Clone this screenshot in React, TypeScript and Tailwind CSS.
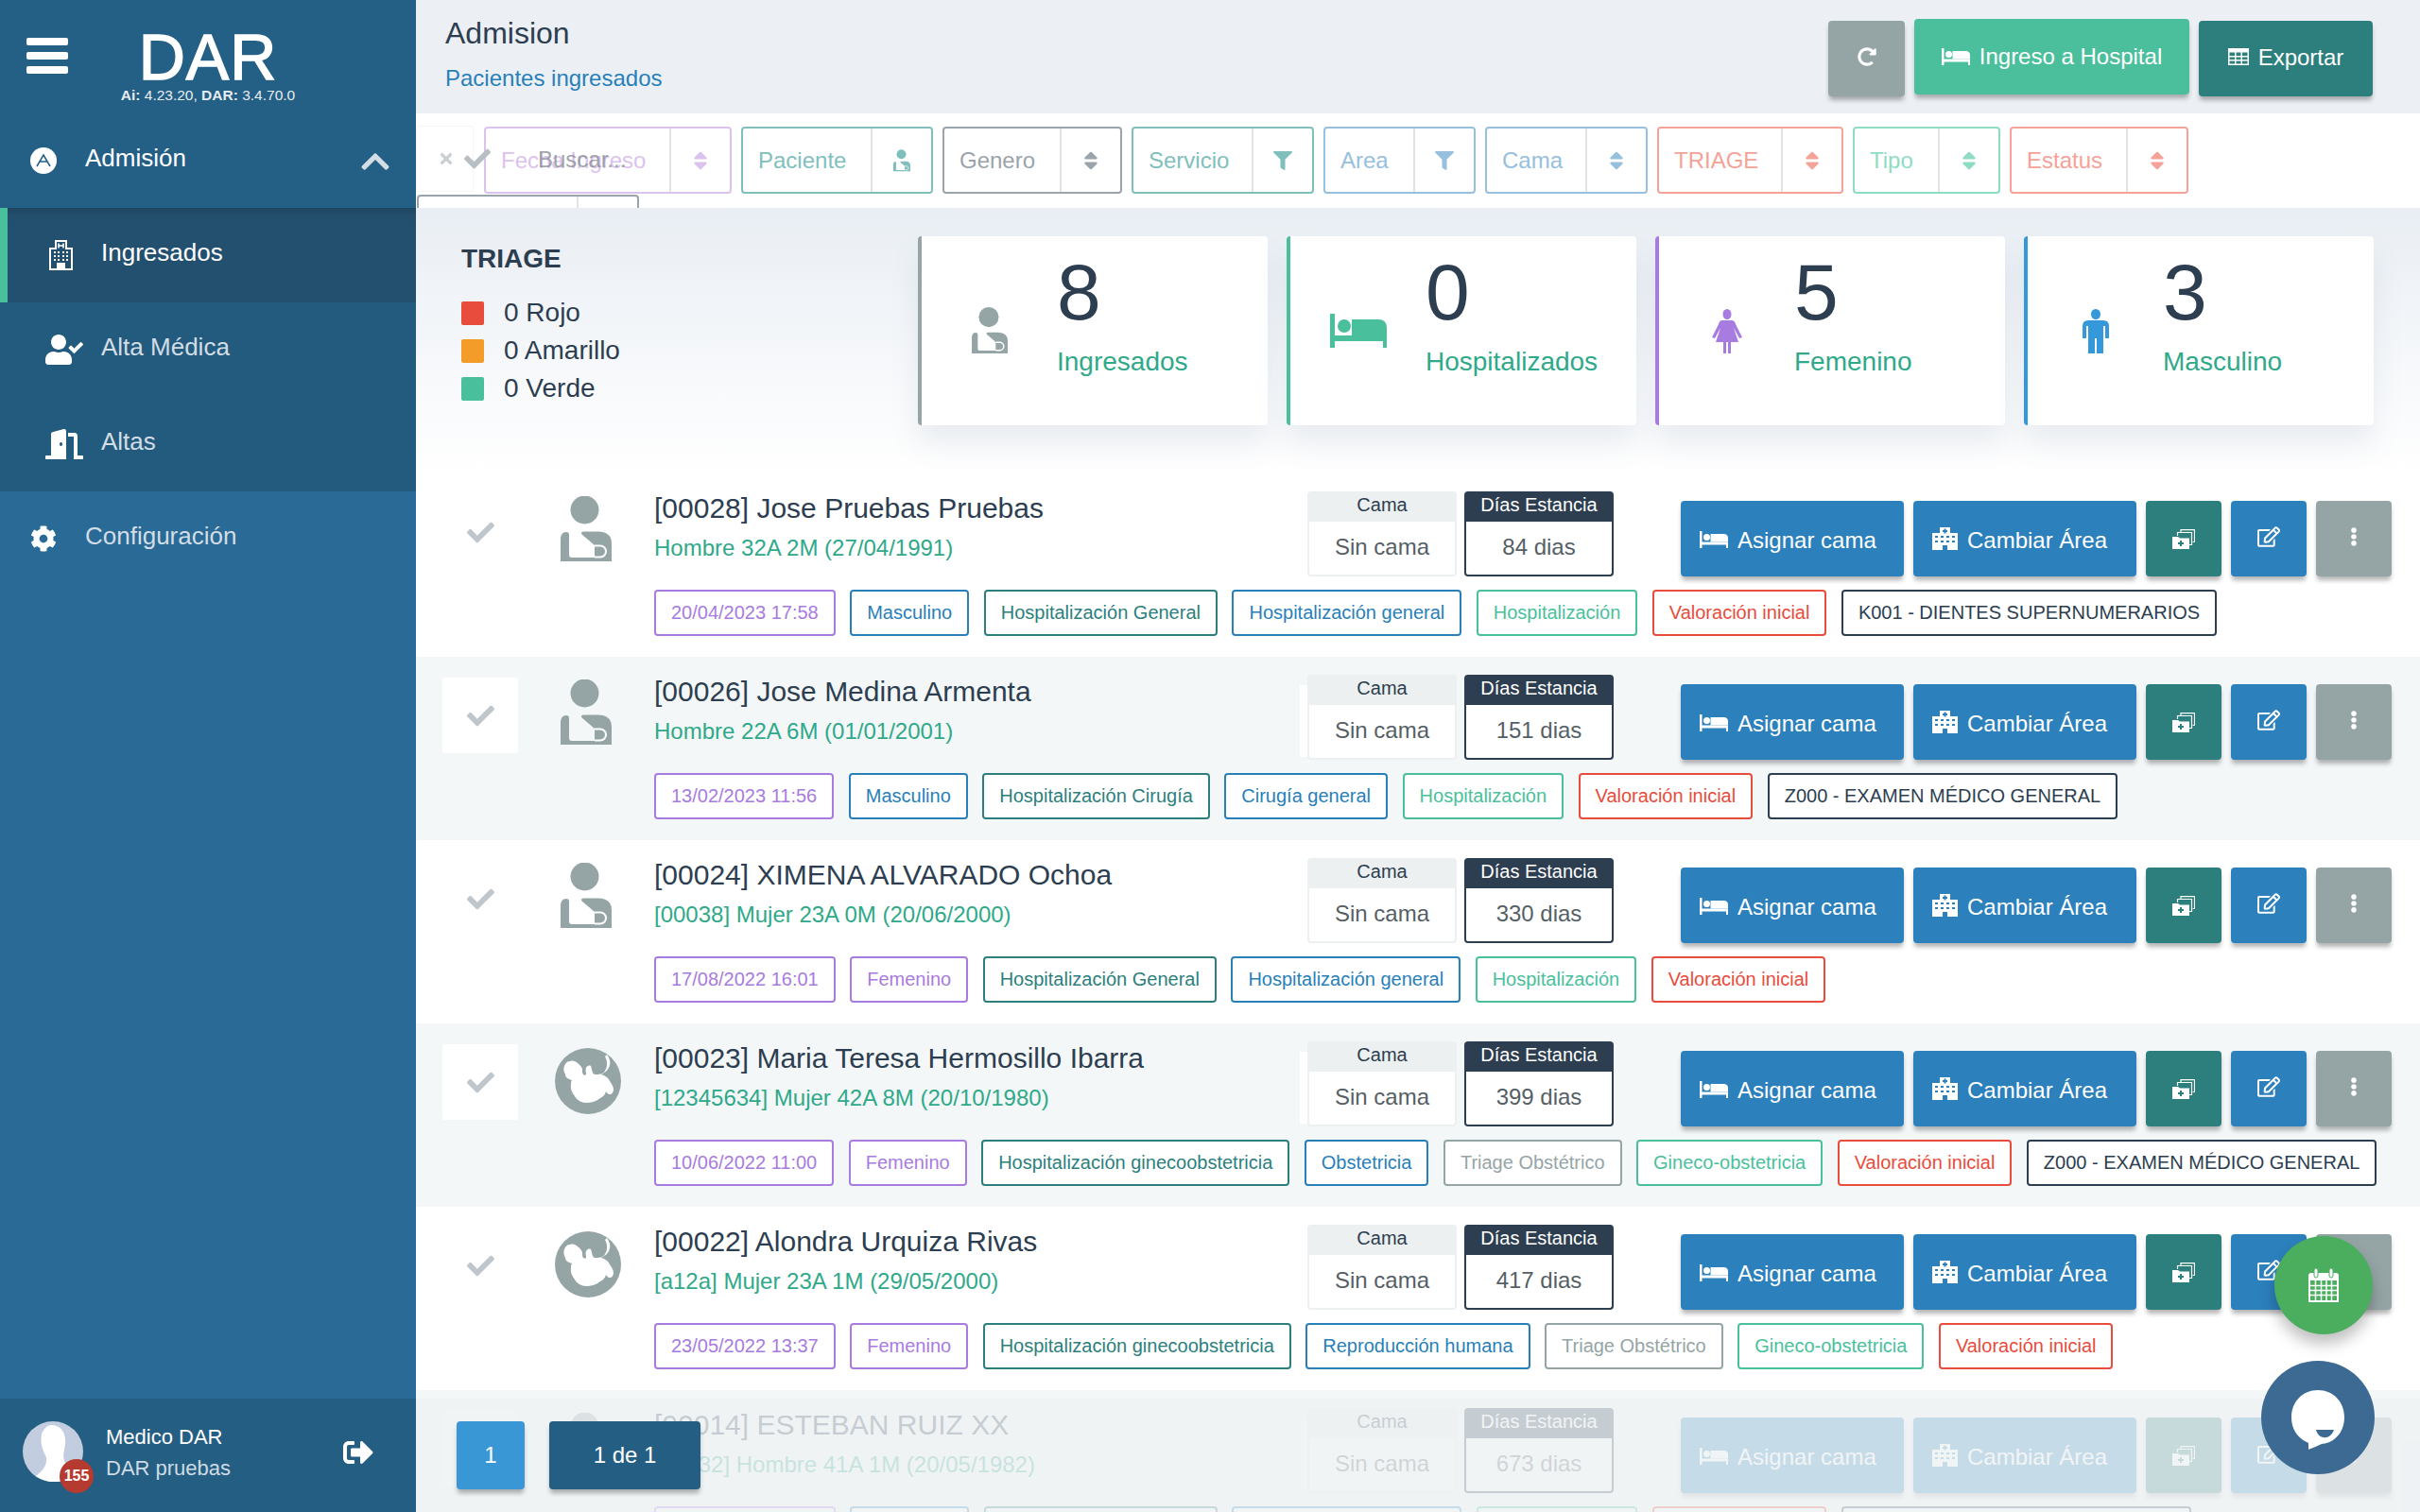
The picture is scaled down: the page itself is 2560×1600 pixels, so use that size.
import React from 'react';
import {
  FaCheck, FaTimes, FaChevronUp, FaCog, FaUserCheck, FaDoorOpen, FaRedoAlt,
  FaSort, FaFilter, FaRegEdit, FaEllipsisV, FaSignOutAlt,
} from 'react-icons/fa';

type IconProps = { className?: string };

const SlingIcon: React.FC<IconProps> = ({ className }) => (
  <svg viewBox="0 0 54 70" className={className} fill="currentColor">
    <circle cx="25.500" cy="14.500" r="15" />
    <path d="M0 69V46Q0 38 6 38Q9 38 9 41V62Q9 65 12 65H36V52L22.500 40.500Q21 38 24 37.500H40Q54 38 54 50V69Z" />
    <path d="M36 52.500H42A6 6 0 0 1 42 64.500H36" fill="none" stroke="white" strokeWidth="2" />
  </svg>
);

const FetusIcon: React.FC<IconProps> = ({ className }) => (
  <svg viewBox="0 0 70 70" className={className}>
    <circle cx="35" cy="35" r="35" fill="#95a5a6" />
    <path
      fill="white"
      d="M55 7C58 11 59 15 58 18C57 23 53 26 49 28C53 29 56 31 58 35C60 38 62 41 62 44C62 47 60 49 58 49C56 49 55 47 54 46C53 50 50 52 48 53C43 57 38 58 33 58C28 58 23 55 21 51C18 47 16 43 17 39C17 37 17 35 18 34C14 33 11 31 11 28C9 25 9 21 10 19C11 16 13 14 16 14C19 13 22 14 24 16C27 18 29 21 29 23C29 25 29 27 30 28C31 29 32 29 33 28C33 26 32 23 33 21C34 19 36 18 38 19C39 21 39 24 40 26C41 28 42 28 44 28C48 28 52 27 53 24C55 21 55 18 55 16C55 13 54 11 53 9Z"
    />
  </svg>
);

const BedIcon: React.FC<IconProps> = ({ className }) => (
  <svg viewBox="0 0 60 36" className={className} fill="currentColor">
    <path d="M0 0H5V23H60V36H56V29H5V36H0Z" />
    <circle cx="15" cy="13" r="7" />
    <path d="M23 6H51Q60 6 60 15V23H23Z" />
  </svg>
);

const FemaleIcon: React.FC<IconProps> = ({ className }) => (
  <svg viewBox="0 0 34 47" className={className} fill="currentColor">
    <ellipse cx="17" cy="5.500" rx="4.500" ry="5.500" />
    <path d="M12 12H22Q25 12 26 16L33 30L30 31L24 20L29 35H21V47H18V35H16V47H13V35H5L10 20L4 31L1 30L8 16Q9 12 12 12Z" />
  </svg>
);

const MaleIcon: React.FC<IconProps> = ({ className }) => (
  <svg viewBox="0 0 28 47" className={className} fill="currentColor">
    <ellipse cx="14" cy="5.500" rx="5" ry="5.500" />
    <path d="M6 12H22Q28 12 28 18V31H24V18H22V47H15V31H13V47H6V18H4V31H0V18Q0 12 6 12Z" />
  </svg>
);

const GridIcon: React.FC<IconProps> = ({ className }) => (
  <svg viewBox="0 0 22 18" className={className} fill="currentColor" fillRule="evenodd">
    <path d="M0 0H22V18H0ZM1.500 4.500V8H7V4.500ZM8.500 4.500V8H13.500V4.500ZM15 4.500V8H20.500V4.500ZM1.500 9.500V12H7V9.500ZM8.500 9.500V12H13.500V9.500ZM15 9.500V12H20.500V9.500ZM1.500 13.500V16.500H7V13.500ZM8.500 13.500V16.500H13.500V13.500ZM15 13.500V16.500H20.500V13.500Z" />
  </svg>
);

const HospitalSolid: React.FC<IconProps> = ({ className }) => (
  <svg viewBox="0 0 27 24" className={className} fill="currentColor" fillRule="evenodd">
    <path d="M8 0H19V6H27V24H16V19H11V24H0V6H8ZM12.500 1.500V3H11V5H12.500V6.500H14.500V5H16V3H14.500V1.500ZM3 9V11H6V9ZM9 9V11H12V9ZM15 9V11H18V9ZM21 9V11H24V9ZM3 14V16H6V14ZM9 14V16H12V14ZM15 14V16H18V14ZM21 14V16H24V14Z" />
  </svg>
);

const HospitalOutline: React.FC<IconProps> = ({ className }) => (
  <svg viewBox="0 0 25 32" className={className} fill="none" stroke="currentColor" strokeWidth="2">
    <path d="M1 31V9H7V1H18V9H24V31Z" />
    <path d="M10 3.500V8.500M15 3.500V8.500M10 6H15" strokeWidth="1.600" />
    <path d="M5 13H7M9 13H11M14 13H16M18 13H20M5 17H7M9 17H11M14 17H16M18 17H20M5 21H7M9 21H11M14 21H16M18 21H20" />
    <path d="M9 31V25H16V31" fill="currentColor" />
  </svg>
);

const FilesIcon: React.FC<IconProps> = ({ className }) => (
  <svg viewBox="0 0 24 21" className={className} fill="none">
    <path d="M9 3V0.700H23.500V13.500H21.500" stroke="white" strokeWidth="1.200" />
    <path d="M5.500 7V3.500H20.500V16.500H18" stroke="white" strokeWidth="1.200" />
    <path d="M0 8H6L8 9.500H18V21H0Z" fill="white" />
    <path d="M9 12V18M6 15H12" stroke="#2c7f7d" strokeWidth="2" />
  </svg>
);

const CalendarIcon: React.FC<IconProps> = ({ className }) => (
  <svg viewBox="0 0 34 36" className={className} fill="none" stroke="white">
    <path d="M1 8Q1 5 4 5H30Q33 5 33 8V36H1Z" fill="white" stroke="none" />
    <path d="M3 13H31V34H3Z" fill="#4bae5f" stroke="none" />
    <path d="M3 18.500H31M3 23.500H31M3 28.500H31M8.500 13V34M14.500 13V34M20 13V34M25.500 13V34" strokeWidth="1.500" />
    <rect x="7" y="0" width="4" height="10" rx="2" fill="white" stroke="#4bae5f" />
    <rect x="23" y="0" width="4" height="10" rx="2" fill="white" stroke="#4bae5f" />
  </svg>
);

const ChatIcon: React.FC<IconProps> = ({ className }) => (
  <svg viewBox="0 0 56 64" className={className}>
    <path d="M28 0C44 0 56 12 56 29C56 44 46 56 32 57C26 60 20 62 18 63L18 56C7 51 0 42 0 29C0 12 12 0 28 0Z" fill="white" />
    <path d="M26 42H45C43 48 38 51 34 50C30 50 27 46 26 42Z" fill="#3d6a92" />
  </svg>
);

const AdmisionIcon: React.FC<IconProps> = ({ className }) => (
  <svg viewBox="0 0 28 28" className={className} fill="none">
    <circle cx="14" cy="14" r="14" fill="white" />
    <path d="M7 20L14 8L21 20M10 15H18" stroke="#245f85" strokeWidth="1.500" />
  </svg>
);

const UserPhoto: React.FC<IconProps> = ({ className }) => (
  <svg viewBox="0 0 64 64" className={className}>
    <circle cx="32" cy="32" r="32" fill="#c3cde0" />
    <path d="M30 4C42 4 46 14 45 24C44 32 42 36 44 42C48 50 50 56 50 60C38 66 26 66 14 58C22 52 26 46 25 38C22 32 18 24 20 14C22 8 26 4 30 4Z" fill="white" />
  </svg>
);

const filters = [
  { label: 'Fecha Ingreso', icon: 'sort', width: 'w-[262px]', tone: 'border-[#dcc3ee] text-[#dcc3ee]' },
  { label: 'Paciente', icon: 'user', width: 'w-[203px]', tone: 'border-[#7fc0bd] text-[#7fc0bd]' },
  { label: 'Genero', icon: 'sort', width: 'w-[190px]', tone: 'border-[#9ba3ab] text-[#9ba3ab]' },
  { label: 'Servicio', icon: 'filter', width: 'w-[193px]', tone: 'border-[#7fc0bd] text-[#7fc0bd]' },
  { label: 'Area', icon: 'filter', width: 'w-[161px]', tone: 'border-[#96c0de] text-[#96c0de]' },
  { label: 'Cama', icon: 'sort', width: 'w-[172px]', tone: 'border-[#96c0de] text-[#96c0de]' },
  { label: 'TRIAGE', icon: 'sort', width: 'w-[197px]', tone: 'border-[#f5a298] text-[#f5a298]' },
  { label: 'Tipo', icon: 'sort', width: 'w-[156px]', tone: 'border-[#8fdcc4] text-[#8fdcc4]' },
  { label: 'Estatus', icon: 'sort', width: 'w-[189px]', tone: 'border-[#f5a298] text-[#f5a298]' },
];

const stats = [
  { value: '8', label: 'Ingresados', border: 'border-[#95a5a6]', icon: <SlingIcon className="w-[38px] h-[50px] text-[#95a5a6]" /> },
  { value: '0', label: 'Hospitalizados', border: 'border-[#4abf9c]', icon: <BedIcon className="w-[60px] h-[36px] text-[#4abf9c]" /> },
  { value: '5', label: 'Femenino', border: 'border-[#a87be0]', icon: <FemaleIcon className="w-[34px] h-[47px] text-[#a87be0]" /> },
  { value: '3', label: 'Masculino', border: 'border-[#3498db]', icon: <MaleIcon className="w-[28px] h-[47px] text-[#3498db]" /> },
];

const tagTones = {
  purple: 'border-[#a87be0] text-[#a87be0]',
  blue: 'border-[#2980b9] text-[#2980b9]',
  teal: 'border-[#2c7f7d] text-[#2c7f7d]',
  green: 'border-[#4abf9c] text-[#4abf9c]',
  red: 'border-[#e74c3c] text-[#e74c3c]',
  dark: 'border-[#2c3e50] text-[#2c3e50]',
  gray: 'border-[#95a5a6] text-[#95a5a6]',
};

type Tone = keyof typeof tagTones;

interface Patient {
  title: string;
  sub: string;
  days: string;
  avatar: 'sling' | 'fetus';
  tags: [string, Tone][];
}

const patients: Patient[] = [
  {
    title: '[00028] Jose Pruebas Pruebas', sub: 'Hombre 32A 2M (27/04/1991)', days: '84 dias', avatar: 'sling',
    tags: [['20/04/2023 17:58', 'purple'], ['Masculino', 'blue'], ['Hospitalización General', 'teal'], ['Hospitalización general', 'blue'], ['Hospitalización', 'green'], ['Valoración inicial', 'red'], ['K001 - DIENTES SUPERNUMERARIOS', 'dark']],
  },
  {
    title: '[00026] Jose Medina Armenta', sub: 'Hombre 22A 6M (01/01/2001)', days: '151 dias', avatar: 'sling',
    tags: [['13/02/2023 11:56', 'purple'], ['Masculino', 'blue'], ['Hospitalización Cirugía', 'teal'], ['Cirugía general', 'blue'], ['Hospitalización', 'green'], ['Valoración inicial', 'red'], ['Z000 - EXAMEN MÉDICO GENERAL', 'dark']],
  },
  {
    title: '[00024] XIMENA ALVARADO Ochoa', sub: '[00038] Mujer 23A 0M (20/06/2000)', days: '330 dias', avatar: 'sling',
    tags: [['17/08/2022 16:01', 'purple'], ['Femenino', 'purple'], ['Hospitalización General', 'teal'], ['Hospitalización general', 'blue'], ['Hospitalización', 'green'], ['Valoración inicial', 'red']],
  },
  {
    title: '[00023] Maria Teresa Hermosillo Ibarra', sub: '[12345634] Mujer 42A 8M (20/10/1980)', days: '399 dias', avatar: 'fetus',
    tags: [['10/06/2022 11:00', 'purple'], ['Femenino', 'purple'], ['Hospitalización ginecoobstetricia', 'teal'], ['Obstetricia', 'blue'], ['Triage Obstétrico', 'gray'], ['Gineco-obstetricia', 'green'], ['Valoración inicial', 'red'], ['Z000 - EXAMEN MÉDICO GENERAL', 'dark']],
  },
  {
    title: '[00022] Alondra Urquiza Rivas', sub: '[a12a] Mujer 23A 1M (29/05/2000)', days: '417 dias', avatar: 'fetus',
    tags: [['23/05/2022 13:37', 'purple'], ['Femenino', 'purple'], ['Hospitalización ginecoobstetricia', 'teal'], ['Reproducción humana', 'blue'], ['Triage Obstétrico', 'gray'], ['Gineco-obstetricia', 'green'], ['Valoración inicial', 'red']],
  },
  {
    title: '[00014] ESTEBAN RUIZ XX', sub: '[00032] Hombre 41A 1M (20/05/1982)', days: '673 dias', avatar: 'sling',
    tags: [['20/04/2022 10:30', 'purple'], ['Masculino', 'blue'], ['Hospitalización General', 'teal'], ['Hospitalización general', 'blue'], ['Hospitalización', 'green'], ['Valoración inicial', 'red'], ['Z000 - EXAMEN MÉDICO GENERAL', 'dark']],
  },
];

const btnShadow = 'shadow-[0_5px_5px_-1px_rgba(0,0,0,0.3)]';

const PatientRow: React.FC<{ patient: Patient; alt: boolean }> = ({ patient, alt }) => (
  <div className={`flex h-[194px] shrink-0 pl-[28px] ${alt ? 'bg-[#f4f7f8]' : 'bg-white'}`}>
    <div className="mt-[22px] w-[80px] h-[80px] bg-white rounded-[3px] flex items-center justify-center shrink-0">
      <FaCheck className="w-[29px] h-[29px] text-[#c0c7cc]" />
    </div>
    <div className="w-[144px] shrink-0 flex justify-center pt-[24px]">
      {patient.avatar === 'sling' ? (
        <SlingIcon className="w-[54px] h-[70px] text-[#95a5a6]" />
      ) : (
        <FetusIcon className="w-[70px] h-[70px] ml-[4px] mt-[2px]" />
      )}
    </div>
    <div className="flex-1 flex flex-col min-w-0">
      <div className="flex h-[123px] pt-[19px]">
        <div className="w-[691px] shrink-0 pt-[1px]">
          <div className="text-[30px] leading-[34px] text-[#2c3e50] whitespace-nowrap">{patient.title}</div>
          <div className="mt-[10px] text-[24px] leading-[30px] text-[#2fa98a] whitespace-nowrap">{patient.sub}</div>
        </div>
        <div className="relative flex gap-[8px] h-[90px] shrink-0">
          {alt && <div className="absolute -left-[8px] top-[11px] w-[166px] h-[76px] bg-white" />}
          <div className="relative w-[158px] text-center">
            <div className="h-[32px] bg-[#ecf0f1] rounded-t-[4px] text-[20px] leading-[28px] text-[#2c3e50]">Cama</div>
            <div className="h-[58px] bg-white border-2 border-t-0 border-[#ecf0f1] rounded-b-[4px] text-[24px] leading-[54px] text-[#555f66]">Sin cama</div>
          </div>
          <div className="relative w-[158px] text-center">
            <div className="h-[32px] bg-[#2c3e50] rounded-t-[4px] text-[20px] leading-[28px] text-white">Días Estancia</div>
            <div className="h-[58px] bg-white border-2 border-t-0 border-[#2c3e50] rounded-b-[4px] text-[24px] leading-[54px] text-[#555f66]">{patient.days}</div>
          </div>
        </div>
        <div className="flex gap-[10px] ml-[71px] mt-[10px] h-[80px] shrink-0 text-white text-[24px]">
          <div className={`w-[236px] bg-[#2c80bc] rounded-[4px] flex items-center pl-[20px] gap-[10px] ${btnShadow}`}>
            <BedIcon className="w-[30px] h-[18px] mt-[2px]" />
            <span className="pt-[3px]">Asignar cama</span>
          </div>
          <div className={`w-[236px] bg-[#2c80bc] rounded-[4px] flex items-center pl-[20px] gap-[10px] ${btnShadow}`}>
            <HospitalSolid className="w-[27px] h-[24px]" />
            <span className="pt-[3px]">Cambiar Área</span>
          </div>
          <div className={`w-[80px] bg-[#2c7f7d] rounded-[4px] flex items-center justify-center ${btnShadow}`}>
            <FilesIcon className="w-[24px] h-[21px]" />
          </div>
          <div className={`w-[80px] bg-[#2c80bc] rounded-[4px] flex items-center justify-center ${btnShadow}`}>
            <FaRegEdit className="w-[24px] h-[24px] -mt-[4px]" />
          </div>
          <div className={`w-[80px] bg-[#95a5a6] rounded-[4px] flex items-center justify-center ${btnShadow}`}>
            <FaEllipsisV className="w-[20px] h-[20px] -mt-[4px]" />
          </div>
        </div>
      </div>
      <div className="flex gap-[15.5px] h-[49px]">
        {patient.tags.map(([text, tone]) => (
          <span
            key={text}
            className={`flex items-center px-[16px] pb-[1px] bg-white border-2 rounded-[4px] text-[20px] whitespace-nowrap ${tagTones[tone]}`}
          >
            {text}
          </span>
        ))}
      </div>
    </div>
  </div>
);

export default function App() {
  return (
    <div className="flex w-screen h-screen overflow-hidden font-['Liberation_Sans',Arial,sans-serif]">
      {/* Sidebar */}
      <aside className="w-[440px] shrink-0 flex flex-col bg-[#2a6a96]">
        <div className="bg-[#245f85]">
          <div className="h-[120px] flex">
            <div className="pl-[28px] pt-[40px]">
              <div className="w-[44px] flex flex-col gap-[7px]">
                <div className="h-[8px] rounded-[2px] bg-white" />
                <div className="h-[8px] rounded-[2px] bg-white" />
                <div className="h-[8px] rounded-[2px] bg-white" />
              </div>
            </div>
            <div className="ml-[55px] pt-[21px] text-white text-center w-[186px] whitespace-nowrap">
              <div className="text-[68px] leading-[78px] tracking-[1px] [-webkit-text-stroke:1.5px_white]">DAR</div>
              <div className="text-[15.5px] leading-[16px] -mt-[6px] text-[#e6edf2]">
                <b>Ai:</b> 4.23.20, <b>DAR:</b> 3.4.70.0
              </div>
            </div>
          </div>
          <div className="h-[100px] flex items-center pl-[32px] pr-[26px] pb-[6px] text-white text-[26px]">
            <AdmisionIcon className="w-[28px] h-[28px] mt-[6px]" />
            <span className="ml-[30px] flex-1">Admisión</span>
            <FaChevronUp className="w-[34px] h-[34px] text-[#d3dde5] mt-[8px]" />
          </div>
        </div>
        <div className="bg-[#235b7e] text-[26px]">
          <div className="h-[100px] flex items-center border-l-[8px] border-[#4abf9c] bg-[#24506f] text-white shadow-[inset_0_12px_12px_-10px_rgba(0,0,0,0.2)]">
            <div className="w-[99px] flex justify-center pl-[36px] pr-[22px]">
              <HospitalOutline className="w-[25px] h-[32px] shrink-0" />
            </div>
            <span className="pb-[5px]">Ingresados</span>
          </div>
          <div className="h-[100px] flex items-center text-[#d3dde5]">
            <div className="w-[107px] flex justify-center pl-[28px]">
              <FaUserCheck className="w-[40px] h-[40px] text-white" />
            </div>
            <span className="pb-[5px]">Alta Médica</span>
          </div>
          <div className="h-[100px] flex items-center text-[#d3dde5]">
            <div className="w-[107px] flex justify-center pl-[28px]">
              <FaDoorOpen className="w-[40px] h-[36px] text-white" />
            </div>
            <span className="pb-[5px]">Altas</span>
          </div>
        </div>
        <div className="h-[100px] flex items-center pl-[32px] text-[26px] text-[#d3dde5]">
          <FaCog className="w-[28px] h-[28px] text-white" />
          <span className="ml-[30px] pb-[5px]">Configuración</span>
        </div>
        <div className="flex-1" />
        <div className="h-[120px] bg-[#245e82] flex items-start pl-[24px] pt-[24px] relative">
          <UserPhoto className="w-[64px] h-[64px]" />
          <span className="absolute left-[63px] top-[64px] w-[36px] h-[36px] rounded-full bg-[#b53a30] text-white text-[16px] font-bold flex items-center justify-center">155</span>
          <div className="ml-[24px] text-[22px] leading-[33px]">
            <div className="text-white">Medico DAR</div>
            <div className="text-[#cfdbe4]">DAR pruebas</div>
          </div>
          <FaSignOutAlt className="absolute left-[363px] top-[41px] w-[32px] h-[32px] text-white" />
        </div>
      </aside>

      {/* Main */}
      <main className="relative flex-1 flex flex-col min-w-0 overflow-hidden bg-white">
        <header className="h-[120px] shrink-0 bg-[#ecf0f4] flex justify-between pl-[31px] pr-[50px]">
          <div>
            <h1 className="mt-[17px] text-[32px] leading-[36px] text-[#2c3e50]">Admision</h1>
            <p className="mt-[16px] text-[24px] leading-[28px] text-[#2980b9]">Pacientes ingresados</p>
          </div>
          <div className="flex gap-[10px] text-white text-[24px]">
            <div className={`mt-[22px] w-[81px] h-[80px] bg-[#95a5a6] rounded-[4px] flex items-center justify-center ${btnShadow}`}>
              <FaRedoAlt className="w-[20px] h-[20px] -mt-[4px]" />
            </div>
            <div className={`mt-[20px] w-[291px] h-[80px] bg-[#4bbf9c] rounded-[4px] flex items-center justify-center gap-[10px] ${btnShadow}`}>
              <BedIcon className="w-[30px] h-[18px]" />
              Ingreso a Hospital
            </div>
            <div className={`mt-[22px] w-[184px] h-[80px] bg-[#2c7f7d] rounded-[4px] flex items-center justify-center gap-[10px] ${btnShadow}`}>
              <GridIcon className="w-[22px] h-[18px] -mt-[4px]" />
              <span className="-mt-[2px]">Exportar</span>
            </div>
          </div>
        </header>

        {/* Filters */}
        <div className="relative h-[100px] shrink-0 bg-white overflow-hidden pl-[72px] pt-[14px] flex gap-[10px] text-[24px]">
          {filters.map((f) => (
            <div key={f.label} className={`h-[71px] shrink-0 flex border-2 rounded-[4px] ${f.width} ${f.tone}`}>
              <span className="flex-1 flex items-center pl-[16px] whitespace-nowrap">{f.label}</span>
              <span className="w-[64px] border-l-2 border-[#e3e3e3] flex items-center justify-center">
                {f.icon === 'sort' && <FaSort className="w-[24px] h-[24px]" />}
                {f.icon === 'filter' && <FaFilter className="w-[20px] h-[20px]" />}
                {f.icon === 'user' && <SlingIcon className="w-[18px] h-[24px]" />}
              </span>
            </div>
          ))}
          <div className="absolute left-0 top-[13px] w-[61px] h-[70px] border border-[#f6f6f6] rounded-[3px] flex items-center">
            <FaTimes className="absolute left-[22px] w-[18px] h-[18px] text-[#c9d0d2]" />
            <FaCheck className="absolute left-[50px] w-[28px] h-[28px] text-[#b8bfc4]" />
          </div>
          <span className="absolute left-[129px] top-[31px] text-[#888f94]/80">Buscar...</span>
          <div className="absolute left-[1px] top-[86px] w-[235px] h-[71px] border-2 border-[#9ba3ab] rounded-[4px] flex justify-end">
            <span className="w-[64px] border-l-2 border-[#e3e3e3]" />
          </div>
        </div>

        {/* Stats */}
        <section className="h-[281px] shrink-0 flex pl-[48px] pt-[30px] bg-gradient-to-b from-[#e9eef4] to-white">
          <div className="w-[483px] shrink-0 pt-[7px] text-[#2c3e50]">
            <div className="text-[28px] leading-[34px] font-bold">TRIAGE</div>
            <div className="mt-[20px] text-[28px]">
              <div className="h-[40px] flex items-center gap-[21px]"><span className="w-[24px] h-[25px] rounded-[2px] bg-[#e74c3c]" />0 Rojo</div>
              <div className="h-[40px] flex items-center gap-[21px]"><span className="w-[24px] h-[25px] rounded-[2px] bg-[#f39c2a]" />0 Amarillo</div>
              <div className="h-[40px] flex items-center gap-[21px]"><span className="w-[24px] h-[25px] rounded-[2px] bg-[#4abf9c]" />0 Verde</div>
            </div>
          </div>
          <div className="flex gap-[20px]">
            {stats.map((s) => (
              <div key={s.label} className={`w-[370px] h-[200px] flex bg-white border-l-4 rounded-[4px] shadow-[0_20px_30px_rgba(100,120,150,0.12)] ${s.border}`}>
                <div className="w-[143px] shrink-0 flex items-center justify-center">{s.icon}</div>
                <div className="pt-[17px]">
                  <div className="text-[84px] leading-[84px] text-[#2c3e50]">{s.value}</div>
                  <div className="mt-[16px] text-[28px] leading-[32px] text-[#2fa98a]">{s.label}</div>
                </div>
              </div>
            ))}
          </div>
        </section>

        {/* Patients */}
        <div className="flex flex-col">
          {patients.map((p, i) => (
            <PatientRow key={p.title} patient={p} alt={i % 2 === 1} />
          ))}
        </div>

        {/* Pagination over the list */}
        <div className="absolute left-0 right-0 bottom-0 h-[120px] bg-[#eef1f3]/80 flex items-start pl-[43px] pt-[24px] gap-[26px] text-white text-[24px]">
          <div className={`w-[72px] h-[72px] bg-[#3a97d5] rounded-[4px] flex items-center justify-center ${btnShadow}`}>1</div>
          <div className={`w-[160px] h-[72px] bg-[#245e82] rounded-[4px] flex items-center justify-center ${btnShadow}`}>1 de 1</div>
        </div>

        {/* Floating buttons */}
        <div className="absolute right-[50px] top-[1308px] w-[104px] h-[104px] rounded-full bg-[#4bae5f] flex items-center justify-center shadow-[0_10px_16px_rgba(0,0,0,0.25)]">
          <CalendarIcon className="w-[34px] h-[36px]" />
        </div>
        <div className="absolute right-[48px] top-[1440px] w-[120px] h-[120px] rounded-full bg-[#3d6a92] flex items-center justify-center">
          <ChatIcon className="w-[56px] h-[64px] mt-[6px]" />
        </div>
      </main>
    </div>
  );
}
